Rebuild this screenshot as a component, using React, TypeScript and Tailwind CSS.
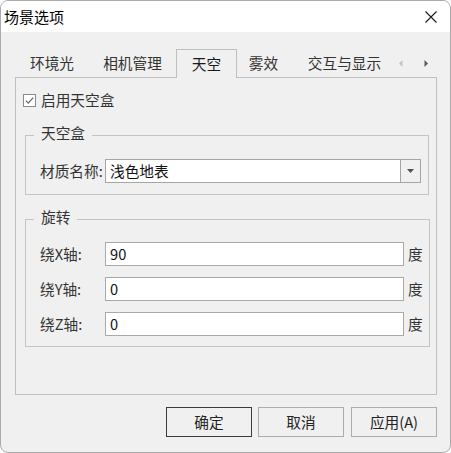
import React from "react";

function Tab({ label, w, selected }: { label: string; w: string; selected?: boolean }) {
  if (selected) {
    return (
      <div
        className={`${w} h-[29px] relative z-10 flex items-center justify-center border border-b-0 border-[#bfbfbf] bg-[#f0f0f0] text-[#1a1a1a]`}
      >
        {label}
      </div>
    );
  }
  return <div className={`${w} h-[28px] flex items-center justify-center text-[#333333]`}>{label}</div>;
}

function Row({ label, value, first }: { label: string; value: string; first?: boolean }) {
  return (
    <div className={`flex items-center h-[24px] ${first ? "" : "mt-[11px]"}`}>
      <div className="w-[65px] leading-[16px]">{label}</div>
      <div className="w-[299px] h-[24px] border border-[#a9a9a9] bg-white flex items-center pl-[4px] text-[#111]">
        {value}
      </div>
      <div className="ml-[4px] leading-[16px]">度</div>
    </div>
  );
}

export default function App() {
  return (
    <div className="w-[451px] h-[453px] bg-white font-['Noto_Sans_CJK_SC',sans-serif] text-[14.67px] text-[#333333]">
      <div className="w-[451px] h-[453px] border border-[#ababab] rounded-[8px] overflow-hidden flex flex-col bg-[#f0f0f0]">
        {/* Title bar */}
        <div className="h-[31px] bg-white flex items-center justify-between pl-[3px] pr-[13px] shrink-0">
          <div className="text-[15px] leading-[18px] text-black">场景选项</div>
          <svg width="12" height="12" viewBox="0 0 12 12">
            <path d="M0.5 0.5 L11.5 11.5 M11.5 0.5 L0.5 11.5" stroke="#1a1a1a" strokeWidth="1.1" fill="none" />
          </svg>
        </div>

        {/* Body */}
        <div className="flex-1 pl-[14px] pt-[17px] pb-[15px] flex flex-col">
          {/* Tabs */}
          <div className="flex items-start h-[28px] w-[422px]">
            <Tab label="环境光" w="w-[74px]" />
            <Tab label="相机管理" w="w-[87px]" />
            <Tab label="天空" w="w-[61px]" selected />
            <Tab label="雾效" w="w-[53px]" />
            <Tab label="交互与显示" w="w-[109px]" />
            <div className="h-[28px] flex items-center">
              <svg width="4" height="7" viewBox="0 0 4 7">
                <path d="M3.5 0 L0 3.5 L3.5 7 Z" fill="#c4c4c4" />
              </svg>
              <svg width="4" height="7" viewBox="0 0 4 7" className="ml-[21px]">
                <path d="M0.5 0 L4 3.5 L0.5 7 Z" fill="#5a5a5a" />
              </svg>
            </div>
          </div>

          {/* Panel */}
          <div className="w-[422px] h-[318px] border border-[#bfbfbf] flex flex-col">
            <div className="ml-[7px] mt-[14px] h-[16px] flex items-center">
              <svg width="13" height="13" viewBox="0 0 13 13">
                <rect x="0.5" y="0.5" width="12" height="12" fill="#ffffff" stroke="#8a8a8a" />
                <path d="M2.8 6.6 L5.3 9.1 L10.2 3.6" stroke="#666666" strokeWidth="1.2" fill="none" />
              </svg>
              <span className="ml-[5px] leading-[16px]">启用天空盒</span>
            </div>

            <fieldset className="ml-[9px] mt-[17px] w-[404px] border border-[#c4c4c4] p-0 m-0 min-w-0">
              <legend className="ml-[8px] px-[7px] pb-[4px] leading-[16px]">天空盒</legend>
              <div className="pl-[14px] pt-[14px] pb-[11px]">
                <div className="flex items-center h-[24px]">
                  <div className="w-[65px] leading-[16px]">材质名称:</div>
                  <div className="w-[316px] h-[24px] border border-[#a5a5a5] bg-white flex">
                    <div className="flex-1 flex items-center pl-[4px] text-[#111]">浅色地表</div>
                    <div className="w-[20px] border-l border-[#a5a5a5] bg-[#f0f0f0] flex items-center justify-center">
                      <svg width="7" height="4" viewBox="0 0 7 4">
                        <path d="M0 0 L7 0 L3.5 4 Z" fill="#505050" />
                      </svg>
                    </div>
                  </div>
                </div>
              </div>
            </fieldset>

            <fieldset className="ml-[9px] mt-[14px] w-[405px] border border-[#c4c4c4] p-0 m-0 min-w-0">
              <legend className="ml-[8px] px-[7px] pb-[4px] leading-[16px]">旋转</legend>
              <div className="pl-[14px] pt-[13px] pb-[10px]">
                <Row label="绕X轴:" value="90" first />
                <Row label="绕Y轴:" value="0" />
                <Row label="绕Z轴:" value="0" />
              </div>
            </fieldset>
          </div>

          {/* Buttons */}
          <div className="w-[422px] mt-[12px] flex justify-end">
            <button className="w-[86px] h-[30px] border border-[#3c3c3c] bg-[#f0f0f0] text-[#222] flex items-center justify-center">
              确定
            </button>
            <button className="ml-[6px] w-[86px] h-[30px] border border-[#adadad] bg-[#f0f0f0] text-[#222] flex items-center justify-center">
              取消
            </button>
            <button className="ml-[7px] w-[86px] h-[30px] border border-[#adadad] bg-[#f0f0f0] text-[#222] flex items-center justify-center">
              应用(A)
            </button>
          </div>
        </div>
      </div>
    </div>
  );
}
